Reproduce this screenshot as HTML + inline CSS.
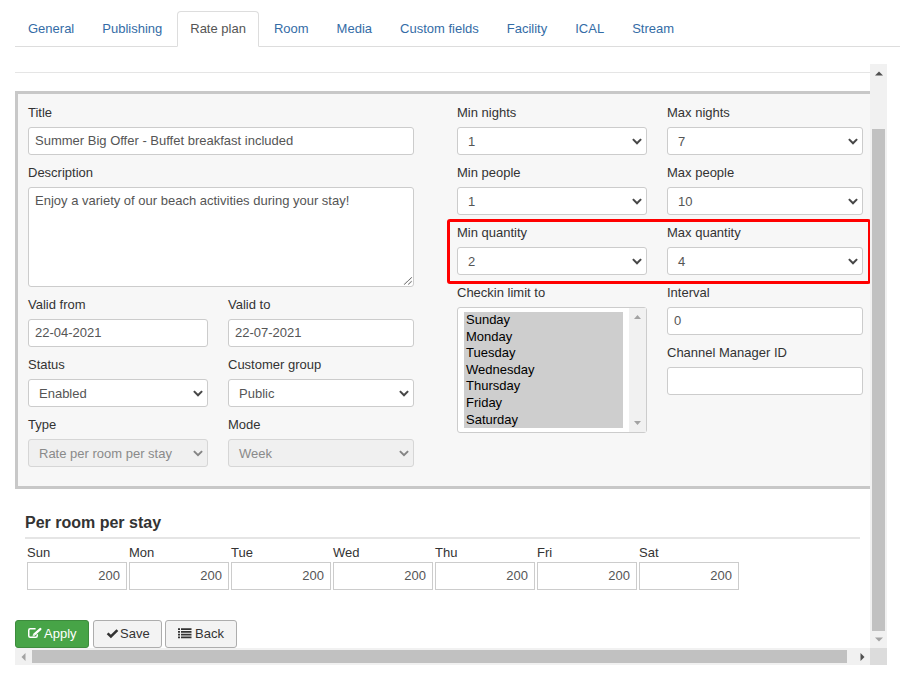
<!DOCTYPE html>
<html><head><meta charset="utf-8">
<style>
*{box-sizing:border-box;margin:0;padding:0}
html,body{width:900px;height:680px;overflow:hidden;background:#fff}
body{position:relative;font-family:"Liberation Sans",sans-serif;font-size:13px;color:#333}
.abs{position:absolute}
.tabs{position:absolute;left:15px;top:11px;right:0;height:36px;border-bottom:1px solid #ddd;display:flex}
.tabs a{display:block;padding:8px 12px;line-height:18px;border:1px solid transparent;border-radius:4px 4px 0 0;margin-right:2px;color:#346ca6;text-decoration:none;height:36px;white-space:nowrap}
.tabs a.act{border-color:#ddd;border-bottom-color:#fff;background:#fff;color:#555;height:36px}
#wrap{position:absolute;left:0;top:0;width:870px;height:648px;overflow:hidden}
.lbl{position:absolute;line-height:15px;height:15px;white-space:nowrap;color:#333}
.inp{position:absolute;background:#fff;border:1px solid #ccc;border-radius:3px;height:28px;color:#555;line-height:26px;padding-left:6px;white-space:nowrap}
.sel{position:absolute;background:#fff;border:1px solid #ccc;border-radius:3px;height:28px;color:#555;line-height:26px;padding-top:1px;padding-left:10px;white-space:nowrap}
.sel svg{position:absolute;right:4px;top:10px}
.dis{background:#f0f0f0;color:#8a8a8a;border-color:#d6d6d6}
.day{position:absolute;top:562px;width:100px;height:28px;border:1px solid #ccc;background:#fff;color:#555;text-align:right;padding-right:6px;line-height:26px}
.opt{left:8px;color:#000;line-height:15px;white-space:nowrap}
.btn{position:absolute;top:620px;height:28px;border:1px solid #adadad;border-radius:3px;background:#f3f3f3;color:#333;line-height:26px;white-space:nowrap}
</style></head><body>
<div class="tabs">
<a>General</a><a>Publishing</a><a class="act">Rate plan</a><a>Room</a><a>Media</a><a>Custom fields</a><a>Facility</a><a>ICAL</a><a>Stream</a>
</div>

<div id="wrap">
 <div class="abs" style="left:15px;top:72px;width:860px;height:1px;background:#e5e5e5"></div>
 <div class="abs" style="left:15px;top:91px;width:861px;height:398px;border:3px solid #c8c8c8;background:#f7f7f7"></div>

 <div class="lbl" style="left:28px;top:105px">Title</div>
 <div class="inp" style="left:28px;top:127px;width:386px">Summer Big Offer - Buffet breakfast included</div>
 <div class="lbl" style="left:28px;top:165px">Description</div>
 <div class="inp" style="left:28px;top:187px;width:386px;height:100px;line-height:18px;padding-top:4px">Enjoy a variety of our beach activities during your stay!
  <svg class="abs" style="left:374px;top:87px" width="10" height="10" viewBox="0 0 10 10"><path d="M1.1 9.4L8.8 2.4M5.3 9.4L8.8 6.2" stroke="#505050" stroke-width="1.2" stroke-dasharray="0.75 0.65" fill="none"/></svg>
 </div>
 <div class="lbl" style="left:28px;top:297px">Valid from</div>
 <div class="lbl" style="left:228px;top:297px">Valid to</div>
 <div class="inp" style="left:28px;top:319px;width:180px">22-04-2021</div>
 <div class="inp" style="left:228px;top:319px;width:186px">22-07-2021</div>
 <div class="lbl" style="left:28px;top:357px">Status</div>
 <div class="lbl" style="left:228px;top:357px">Customer group</div>
 <div class="sel" style="left:28px;top:379px;width:180px">Enabled<svg width="10" height="7" viewBox="0 0 10 7"><path d="M0.9 1.1L5 5.2L9.1 1.1" stroke="#474747" stroke-width="2.05" fill="none"/></svg></div>
 <div class="sel" style="left:228px;top:379px;width:186px">Public<svg width="10" height="7" viewBox="0 0 10 7"><path d="M0.9 1.1L5 5.2L9.1 1.1" stroke="#474747" stroke-width="2.05" fill="none"/></svg></div>
 <div class="lbl" style="left:28px;top:417px">Type</div>
 <div class="lbl" style="left:228px;top:417px">Mode</div>
 <div class="sel dis" style="left:28px;top:439px;width:180px">Rate per room per stay<svg width="10" height="7" viewBox="0 0 10 7"><path d="M0.9 1.1L5 5.2L9.1 1.1" stroke="#858585" stroke-width="2" fill="none"/></svg></div>
 <div class="sel dis" style="left:228px;top:439px;width:186px">Week<svg width="10" height="7" viewBox="0 0 10 7"><path d="M0.9 1.1L5 5.2L9.1 1.1" stroke="#858585" stroke-width="2" fill="none"/></svg></div>

 <div class="lbl" style="left:457px;top:105px">Min nights</div>
 <div class="lbl" style="left:667px;top:105px">Max nights</div>
 <div class="sel" style="left:457px;top:127px;width:190px">1<svg width="10" height="7" viewBox="0 0 10 7"><path d="M0.9 1.1L5 5.2L9.1 1.1" stroke="#474747" stroke-width="2.05" fill="none"/></svg></div>
 <div class="sel" style="left:667px;top:127px;width:196px">7<svg width="10" height="7" viewBox="0 0 10 7"><path d="M0.9 1.1L5 5.2L9.1 1.1" stroke="#474747" stroke-width="2.05" fill="none"/></svg></div>
 <div class="lbl" style="left:457px;top:165px">Min people</div>
 <div class="lbl" style="left:667px;top:165px">Max people</div>
 <div class="sel" style="left:457px;top:187px;width:190px">1<svg width="10" height="7" viewBox="0 0 10 7"><path d="M0.9 1.1L5 5.2L9.1 1.1" stroke="#474747" stroke-width="2.05" fill="none"/></svg></div>
 <div class="sel" style="left:667px;top:187px;width:196px">10<svg width="10" height="7" viewBox="0 0 10 7"><path d="M0.9 1.1L5 5.2L9.1 1.1" stroke="#474747" stroke-width="2.05" fill="none"/></svg></div>
 <div class="lbl" style="left:457px;top:225px">Min quantity</div>
 <div class="lbl" style="left:667px;top:225px">Max quantity</div>
 <div class="sel" style="left:457px;top:247px;width:190px">2<svg width="10" height="7" viewBox="0 0 10 7"><path d="M0.9 1.1L5 5.2L9.1 1.1" stroke="#474747" stroke-width="2.05" fill="none"/></svg></div>
 <div class="sel" style="left:667px;top:247px;width:196px">4<svg width="10" height="7" viewBox="0 0 10 7"><path d="M0.9 1.1L5 5.2L9.1 1.1" stroke="#474747" stroke-width="2.05" fill="none"/></svg></div>

 <div class="lbl" style="left:457px;top:285px">Checkin limit to</div>
 <div class="lbl" style="left:667px;top:285px">Interval</div>
 <div class="abs" style="left:457px;top:307px;width:190px;height:126px;border:1px solid #ccc;border-radius:3px;background:#fff">
  <div class="abs" style="left:6px;top:4px;width:159px;height:116px;background:#cecece"></div>
  <div class="abs opt" style="top:4px">Sunday</div><div class="abs opt" style="top:21px">Monday</div><div class="abs opt" style="top:37px">Tuesday</div><div class="abs opt" style="top:54px">Wednesday</div><div class="abs opt" style="top:70px">Thursday</div><div class="abs opt" style="top:87px">Friday</div><div class="abs opt" style="top:104px">Saturday</div>
  <div class="abs" style="left:171px;top:0;width:17px;height:124px;background:#f1f1f1"></div>
  <svg class="abs" style="left:176px;top:7px" width="7" height="4" viewBox="0 0 7 4"><path d="M0 4L3.5 0L7 4Z" fill="#a3a3a3"/></svg>
  <svg class="abs" style="left:176px;top:113px" width="7" height="4" viewBox="0 0 7 4"><path d="M0 0L3.5 4L7 0Z" fill="#a3a3a3"/></svg>
 </div>
 <div class="inp" style="left:667px;top:307px;width:196px">0</div>
 <div class="lbl" style="left:667px;top:345px">Channel Manager ID</div>
 <div class="inp" style="left:667px;top:367px;width:196px"></div>

 <div class="abs" style="left:25px;top:513px;font-size:16px;font-weight:bold;line-height:20px;color:#333;white-space:nowrap">Per room per stay</div>
 <div class="abs" style="left:25px;top:537px;width:835px;height:2px;background:#e5e5e5"></div>
 <div class="lbl" style="left:27px;top:545px">Sun</div>
 <div class="lbl" style="left:129px;top:545px">Mon</div>
 <div class="lbl" style="left:231px;top:545px">Tue</div>
 <div class="lbl" style="left:333px;top:545px">Wed</div>
 <div class="lbl" style="left:435px;top:545px">Thu</div>
 <div class="lbl" style="left:537px;top:545px">Fri</div>
 <div class="lbl" style="left:639px;top:545px">Sat</div>
 <div class="day" style="left:27px">200</div>
 <div class="day" style="left:129px">200</div>
 <div class="day" style="left:231px">200</div>
 <div class="day" style="left:333px">200</div>
 <div class="day" style="left:435px">200</div>
 <div class="day" style="left:537px">200</div>
 <div class="day" style="left:639px">200</div>

 <div class="btn" style="left:15px;width:74px;background:#47a447;border-color:#3d8b3d;color:#fff">
  <svg class="abs" style="left:11px;top:6px" width="16" height="12" viewBox="0 0 16 12"><path d="M8.6 1.75H3.2Q1.75 1.75 1.75 3.2V8.8Q1.75 10.25 3.2 10.25H8.8Q10.25 10.25 10.25 8.8V7.2" stroke="#fff" stroke-width="1.5" fill="none"/><path d="M7.1 7.7L13.3 2.1" stroke="#fff" stroke-width="2.4" stroke-linecap="round" fill="none"/><path d="M5.5 9.5L6.1 7.0L8.0 8.8Z" fill="#fff"/><circle cx="7" cy="8.1" r="0.5" fill="#47a447"/></svg>
  <span class="abs" style="left:28px;top:0">Apply</span></div>
 <div class="btn" style="left:93px;width:69px">
  <svg class="abs" style="left:12px;top:8px" width="13" height="10" viewBox="0 0 13 10"><path d="M1.6 4.4L4.9 7.5L11.4 1.2" stroke="#333" stroke-width="2.5" fill="none"/></svg>
  <span class="abs" style="left:26px;top:0">Save</span></div>
 <div class="btn" style="left:165px;width:72px">
  <svg class="abs" style="left:12px;top:7px" width="14" height="11" viewBox="0 0 14 11"><path d="M0 0.2h2v1.7h-2zM0 3h2v1.7h-2zM0 5.8h2v1.7h-2zM0 8.5h2v1.7h-2zM3 0.2h10.5v1.7h-10.5zM3 3h10.5v1.7h-10.5zM3 5.8h10.5v1.7h-10.5zM3 8.5h10.5v1.7h-10.5z" fill="#333"/></svg>
  <span class="abs" style="left:29px;top:0">Back</span></div>
</div>

 <div class="abs" style="left:447px;top:219px;width:424px;height:65px;border:3px solid #f00;border-radius:3px"></div>
<!-- vertical scrollbar -->
<div class="abs" style="left:870px;top:64px;width:17px;height:584px;background:#f1f1f1">
 <svg class="abs" style="left:5px;top:7px" width="8" height="5" viewBox="0 0 8 5"><path d="M0 4.5L4 0.5L8 4.5Z" fill="#505050"/></svg>
 <div class="abs" style="left:2px;top:65px;width:13px;height:502px;background:#c1c1c1"></div>
 <svg class="abs" style="left:5px;top:573px" width="8" height="5" viewBox="0 0 8 5"><path d="M0 0.5L4 4.5L8 0.5Z" fill="#a3a3a3"/></svg>
</div>
<!-- horizontal scrollbar -->
<div class="abs" style="left:15px;top:648px;width:855px;height:17px;background:#f1f1f1">
 <svg class="abs" style="left:6px;top:5px" width="5" height="8" viewBox="0 0 5 8"><path d="M4.5 0L0.5 4L4.5 8Z" fill="#a3a3a3"/></svg>
 <div class="abs" style="left:17px;top:2px;width:815px;height:13px;background:#c1c1c1"></div>
 <svg class="abs" style="left:845px;top:5px" width="5" height="8" viewBox="0 0 5 8"><path d="M0.5 0L4.5 4L0.5 8Z" fill="#505050"/></svg>
</div>
<div class="abs" style="left:870px;top:648px;width:17px;height:17px;background:#dcdcdc"></div>
</body></html>
